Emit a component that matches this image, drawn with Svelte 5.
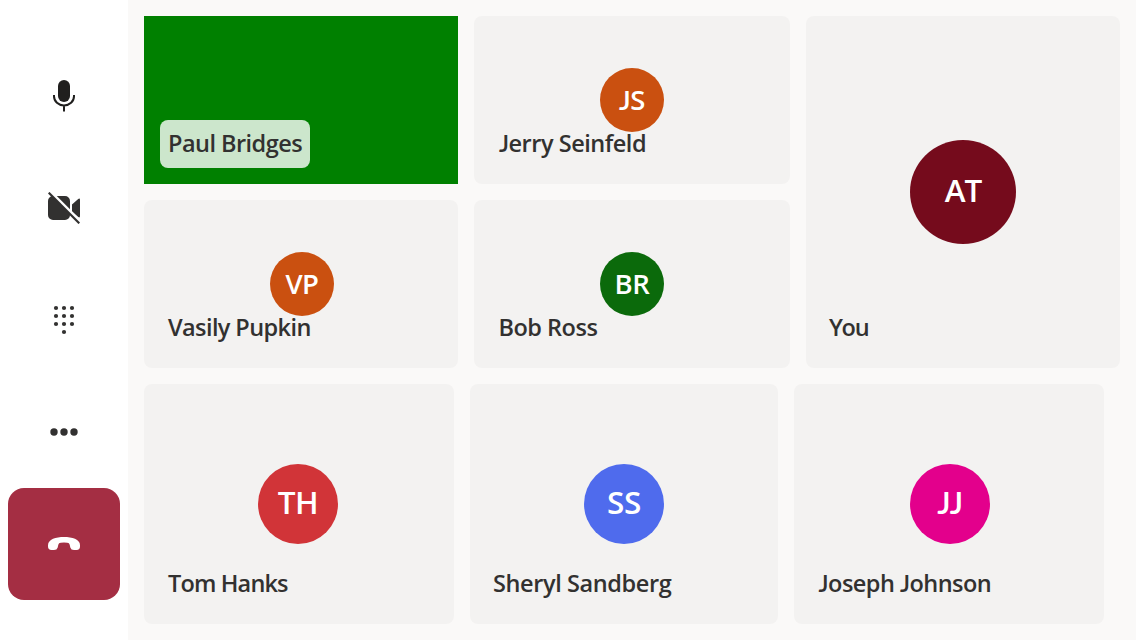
<script>
  const people = [
    { name: 'Paul Bridges', tracking: -0.54, video: true },
    { name: 'Jerry Seinfeld', tracking: -0.48, indent: 1, initials: 'JS', color: '#ca5010', size: 'small' },
    { name: 'You', tracking: -1.3, indent: -1, initials: 'AT', color: '#750b1c', size: 'large' },
    { name: 'Vasily Pupkin', tracking: -0.6, initials: 'VP', color: '#ca5010', size: 'small', nudge: 2 },
    { name: 'Bob Ross', tracking: -0.5, indent: 0.5, initials: 'BR', color: '#0b6a0b', size: 'small' }
  ];
  const overflow = [
    { name: 'Tom Hanks', tracking: -0.85, initials: 'TH', color: '#d13438', size: 'medium', nudge: -2 },
    { name: 'Sheryl Sandberg', tracking: -0.4, indent: -1, initials: 'SS', color: '#4f6bed', size: 'medium' },
    { name: 'Joseph Johnson', tracking: -0.53, indent: 0.6, initials: 'JJ', color: '#e3008c', size: 'medium', nudge: 2 }
  ];
  const keys = [
    [56, 308], [64, 308], [72, 308],
    [56, 316], [64, 316], [72, 316],
    [56, 324], [64, 324], [72, 324],
    [64, 332]
  ];
</script>

{#snippet letters(text)}{#each text.split('') as c}{#if c === 'J'}<span class="jay">J</span>{:else}{c}{/if}{/each}{/snippet}

{#snippet tile(p)}
  <article class="tile {p.size ?? ''}" class:video={p.video}>
    {#if p.initials}
      <div class="avatar" style:background={p.color} style:margin-left="{p.nudge ?? 0}px"><span>{@render letters(p.initials)}</span></div>
    {/if}
    <div class="name" style:letter-spacing="{p.tracking}px" style:text-indent="{p.indent ?? 0}px">{@render letters(p.name)}</div>
  </article>
{/snippet}

<div class="call">
  <nav>
    <button aria-label="Microphone">
      <svg width="32" height="32" viewBox="48 80 32 32">
        <rect x="58" y="80" width="12" height="22" rx="6" fill="#201f1e" />
        <path d="M54 95v1.200a10 9.300 0 0 0 20 0V95M64 105v6.500" fill="none" stroke="#201f1e" stroke-width="2" />
      </svg>
    </button>
    <button aria-label="Camera off">
      <svg width="32" height="32" viewBox="48 192 32 32">
        <path d="M53.500 196H65a5 5 0 0 1 5 5v14a5 5 0 0 1-5 5H53a5 5 0 0 1-5-5v-14a5 5 0 0 1 5-5zM72 204.500l6.200-5.600q1.800-1.200 1.800 1v16.200q0 2.200-1.800 1L72 211.500z" fill="#323130" />
        <path d="M51.500 193L81 222.500" stroke="#fff" stroke-width="3.200" />
        <path d="M48.700 192.700L79.300 223.300" stroke="#323130" stroke-width="2.200" />
      </svg>
    </button>
    <button aria-label="Dialpad">
      <svg width="32" height="32" viewBox="48 304 32 32">
        {#each keys as [x, y]}<circle cx={x} cy={y} r="2.100" fill="#323130" />{/each}
      </svg>
    </button>
    <button aria-label="More">
      <svg width="32" height="32" viewBox="48 416 32 32" fill="#323130">
        <circle cx="54" cy="432" r="3.700" /><circle cx="64" cy="432" r="3.700" /><circle cx="74" cy="432" r="3.700" />
      </svg>
    </button>
    <button class="hangup" aria-label="Hang up">
      <svg width="32" height="32" viewBox="48 528 32 32">
        <path d="M48 545.200C48 539.200 56 537 64 537S80 539.200 80 545.200V546.200Q80 550 76.500 550H74Q71 550 70.300 547.500L69.700 544.800Q69.300 542.900 67.300 542.700Q64 542.200 60.700 542.700Q58.700 542.900 58.300 544.800L57.700 547.500Q57 550 54 550H51.500Q48 550 48 546.200Z" fill="#fff" />
      </svg>
    </button>
  </nav>
  <main>
    <section class="grid">{#each people as p}{@render tile(p)}{/each}</section>
    <section class="row">{#each overflow as p}{@render tile(p)}{/each}</section>
  </main>
</div>

<style>
  :global(body) { margin: 0; }
  .call {
    display: flex;
    width: 1136px;
    height: 640px;
    overflow: hidden;
    background: #faf9f8;
    color: #323130;
    font-family: "Open Sans", "Noto Sans", sans-serif;
    font-weight: 600;
  }
  nav {
    display: flex;
    flex-direction: column;
    align-items: center;
    box-sizing: border-box;
    width: 128px;
    padding-top: 40px;
    background: #fff;
  }
  button {
    display: grid;
    place-items: center;
    width: 112px;
    height: 112px;
    padding: 0;
    border: 0;
    background: none;
  }
  .hangup { border-radius: 16px; background: #a42e43; }
  main {
    display: flex;
    flex-direction: column;
    gap: 16px;
    padding: 16px;
  }
  .grid {
    display: grid;
    grid-template-columns: 314px 316px 314px;
    grid-template-rows: 168px 168px;
    gap: 16px;
  }
  .row {
    display: grid;
    grid-template-columns: 310px 308px 310px;
    grid-template-rows: 240px;
    gap: 16px;
  }
  .tile {
    display: grid;
    min-width: 0;
    border-radius: 8px;
    background: #f3f2f1;
  }
  .tile > * { grid-area: 1 / 1; }
  .large { grid-area: 1 / 3 / 3 / 4; }
  .video { border-radius: 0; background: #008000; }
  .avatar {
    display: grid;
    place-items: center;
    place-self: center;
    width: 64px;
    height: 64px;
    border-radius: 50%;
    color: #fff;
    font-size: 27.500px;
    letter-spacing: -0.400px;
    line-height: 64px;
  }
  .medium .avatar { width: 80px; height: 80px; font-size: 31.500px; line-height: 76px; align-items: start; }
  .large .avatar { width: 106px; height: 104px; font-size: 31.500px; letter-spacing: -1px; line-height: 100px; align-items: start; }
  .name {
    align-self: end;
    justify-self: start;
    box-sizing: border-box;
    height: 48px;
    margin: 0 0 16px 16px;
    padding: 0 8px;
    border-radius: 8px;
    font-size: 23.500px;
    line-height: 47px;
    white-space: nowrap;
  }
  .video .name { width: 150px; background: #cce6cc; }
  .jay { font-family: Lato, sans-serif; font-weight: 600; }
</style>
